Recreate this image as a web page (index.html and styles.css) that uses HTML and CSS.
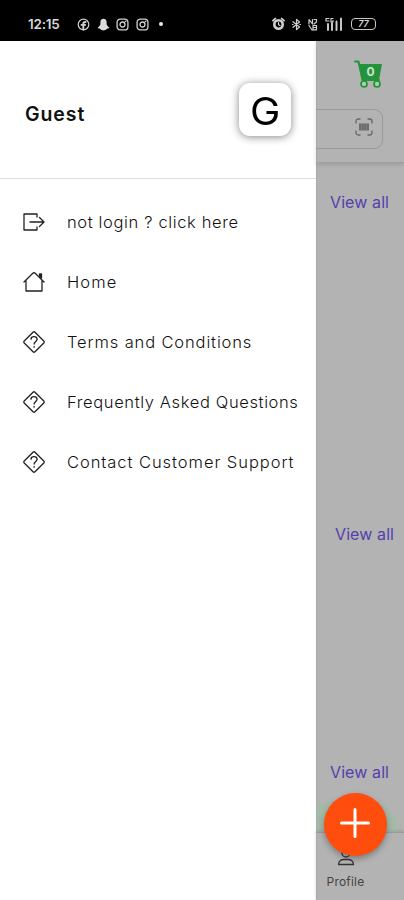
FILE: index.html
```
<!DOCTYPE html>
<html lang="en">
<head>
<meta charset="utf-8">
<title>Guest menu</title>
<link rel="stylesheet" href="styles.css">
</head>
<body>
<svg class="defs" width="0" height="0" aria-hidden="true">
  <symbol id="insta" viewBox="0 0 12 12"><rect x="1" y="1" width="10" height="10" rx="3"/><circle cx="6" cy="6" r="2.3"/><path d="M8.6 3.2h.4"/></symbol>
  <symbol id="help" viewBox="0 0 24 24"><path d="M11 2.2Q12 1.2 13 2.2L21.8 11Q22.8 12 21.8 13L13 21.8Q12 22.8 11 21.8L2.2 13Q1.2 12 2.2 11Z"/><path class="mark" d="M9 9.2C9 7.4 10.3 6.6 12 6.6s3.1 1 3.1 2.7c0 2-3 2.3-3 4.8M12.1 16.500v.7"/></symbol>
</svg>
<div class="screen">
  <header class="status">
    <span class="clock">12:15</span>
    <div class="notices">
      <svg class="line" width="13" height="13" viewBox="0 0 13 13"><circle cx="6.5" cy="6.5" r="5.3"/><path class="thick" d="M6.3 11.5V5.7Q6.3 3.9 8.5 4M4.5 6.9h3.7"/></svg>
      <svg class="solid" width="13" height="13" viewBox="0 0 13 13"><path d="M6.5.7C4.4.7 3.4 2.1 3.4 4v2.6L2.4 8 .5 10l2.5.8 1 1 2.5.6 2.500-.6 1-1 2.5-.8-1.900-2-1-1.4V4C9.600 2.100 8.600.7 6.500.7Z"/></svg>
      <svg class="line" width="13" height="13"><use href="#insta"/></svg>
      <svg class="line" width="13" height="13"><use href="#insta"/></svg>
      <i class="more"></i>
    </div>
    <div class="system">
      <svg class="line" width="13" height="14" viewBox="0 0 13 14"><circle class="alarm" cx="6.500" cy="7.500" r="4.200"/><path class="thick" d="M1 3.600 3.300 1.600M12 3.600 9.700 1.600"/><path d="M6.500 5.500v2.200l1.500.8"/></svg>
      <svg class="line" width="9" height="13" viewBox="0 0 9 13"><path d="M1 3.700 7.500 9 4.500 11.600V1.400L7.500 4 1 9.300M.5 6.500h.6M7.900 6.500h.6"/></svg>
      <svg class="line" width="10" height="13" viewBox="0 0 10 13"><path d="M1 6V1.500L4.500 6V1.500M6 1.500h2.500V4L6 6M1 7.500 4 12M5 7.500v4.300h3.500V7.500ZM5 9.500h3"/></svg>
      <svg class="line" width="19" height="14" viewBox="0 0 19 14"><path d="M1 1.500h3M1 1.500V4h3M8 1.500H6V5h2V3.500"/><path class="bars" d="M3 7v6M7 6v7M11.500 4.500V13M16 1.500V13"/></svg>
      <div class="battery"><span>77</span></div>
    </div>
  </header>
  <div class="body">
    <aside class="drawer">
      <div class="account">
        <h1>Guest</h1>
        <div class="logo"><span>G</span></div>
      </div>
      <nav>
        <a class="item login"><svg viewBox="0 0 24 24"><path d="M15 7V4H2v16h13v-3M8 12h13.500M17.500 7.500 22 12l-4.500 4.500"/></svg><span>not login ? click here</span></a>
        <a class="item home"><svg viewBox="0 0 24 24"><path d="M2 12 10.800 3.300Q12 2.200 13.200 3.300L22 12M4 10.500V21h16V10.500"/><path class="chimney" d="M17.500 4H19.500V8L17.500 6Z"/></svg><span>Home</span></a>
        <a class="item terms"><svg><use href="#help"/></svg><span>Terms and Conditions</span></a>
        <a class="item faq"><svg><use href="#help"/></svg><span>Frequently Asked Questions</span></a>
        <a class="item contact"><svg><use href="#help"/></svg><span>Contact Customer Support</span></a>
      </nav>
    </aside>
    <main class="page">
      <section class="top">
        <div class="cart"><svg width="30" height="30" viewBox="0 0 30 30"><path class="basket" d="M5.500 5H28L25.200 20H8Z"/><path class="frame" d="M1 2.500H4.500L8.500 21H25"/><circle cx="10" cy="25" r="3"/><circle cx="23" cy="25" r="3"/></svg><b>0</b></div>
        <div class="search"><svg width="18" height="18" viewBox="0 0 18 18"><path d="M1 5V3.500Q1 1 3.500 1H5M13 1h1.500Q17 1 17 3.500V5M17 13v1.500Q17 17 14.500 17H13M5 17H3.500Q1 17 1 14.500V13"/><path class="code" d="M4 5.500h10v7H4Z"/><path class="gap" d="M6.500 6v5.500M9 6v5.500M11.500 6v5.500"/></svg></div>
      </section>
      <section class="shelf first"><a>View all</a></section>
      <section class="shelf second"><a>View all</a></section>
      <section class="shelf third"><a>View all</a></section>
      <footer class="tab"><svg width="18" height="18" viewBox="0 0 18 18"><circle cx="9" cy="5" r="4"/><path d="M1.500 16.500Q2 11.500 7 11.500h4Q16 11.500 16.500 16.500Z"/></svg><span>Profile</span></footer>
      <div class="glow"></div>
      <button class="fab" aria-label="Add"><svg width="30" height="30" viewBox="0 0 30 30"><path d="M15 1.500v27M1.500 15h27"/></svg></button>
    </main>
  </div>
</div>
</body>
</html>
```
FILE: styles.css
```
* { box-sizing: border-box; }
body { margin: 0; font-family: Inter, "Liberation Sans", sans-serif; }
.defs { position: absolute; }
svg { fill: none; stroke-linecap: round; stroke-linejoin: round; flex: none; }
.screen { width: 404px; height: 900px; overflow: hidden; display: flex; flex-direction: column; }
.status { height: 41px; flex: none; background: #000; color: #d8d8d8; display: flex; align-items: center; padding: 7px 28px 0 28px; }
.clock { width: 49px; font-size: 13.500px; font-weight: 600; letter-spacing: -.2px; }
.notices { display: flex; align-items: center; gap: 6.500px; }
.line { stroke: #d0d0d0; stroke-width: 1.200; }
.line .thick, .line .bars { stroke-width: 1.900; }
.line .alarm { stroke-width: 2.600; }
.solid { fill: #ddd; }
.more { width: 4px; height: 4px; border-radius: 50%; background: #e8e8e8; margin-left: 4px; }
.system { margin-left: auto; display: flex; align-items: center; gap: 7px; }
.battery { width: 25px; height: 12px; border: 1.500px solid #c8c8c8; border-radius: 4px; font-size: 9px; font-weight: 600; font-style: italic; line-height: 9px; text-align: center; }
.body { flex: 1; display: flex; min-height: 0; }
.drawer { width: 316px; flex: none; background: #fff; color: #111; }
.account { height: 138px; border-bottom: 1px solid #dedede; display: flex; align-items: center; justify-content: space-between; padding: 0 25px 0 25px; }
h1 { margin: 8px 0 0; font-size: 19.500px; font-weight: 600; letter-spacing: .9px; }
.logo { width: 52px; height: 53px; border-radius: 11px; box-shadow: 0 1px 8px rgba(0,0,0,.48); display: grid; place-items: center; font-size: 38px; line-height: 53px; color: #000; }
.logo span { padding-top: 3px; line-height: 50px; transform: scaleX(1.070); }
nav { padding-top: 12.500px; }
.item { height: 60.200px; display: flex; align-items: center; gap: 21px; padding-left: 22px; font-size: 16.500px; font-weight: 300; white-space: nowrap; }
.login { letter-spacing: .640px; }
.home { letter-spacing: 1.150px; }
.terms { letter-spacing: .870px; }
.faq { letter-spacing: .630px; }
.contact { letter-spacing: .950px; }
.item svg { width: 24px; height: 24px; stroke: #222; stroke-width: 1.300; }
.item .mark { stroke-width: 1.600; }
.item .chimney { fill: #222; }
.page { width: 88px; position: relative; background: #b3b3b3; display: flex; flex-direction: column; box-shadow: inset 1px 0 #a9a9a9; }
.top { height: 122px; flex: none; border-bottom: 1px solid #a0a0a0; box-shadow: 0 2px 4px rgba(0,0,0,.12); display: flex; flex-direction: column; align-items: flex-start; }
.cart { display: grid; margin: 18px 0 0 38px; width: 30px; height: 30px; place-items: center; }
.cart svg, .cart b { grid-area: 1 / 1; }
.cart b { color: #cde5ce; font-size: 12px; line-height: 12px; margin: -4px 0 0 3px; }
.basket { fill: #24933b; }
.cart .frame { stroke: #24933b; stroke-width: 2; }
.cart circle { stroke: #24933b; stroke-width: 1.700; fill: #acd0ae; }
.search { width: 67px; height: 40px; margin-top: 20px; border: 1px solid #999; border-left: 0; border-radius: 0 9px 9px 0; display: flex; align-items: flex-start; justify-content: flex-end; padding: 8px 9px; }
.search svg { stroke: #666; stroke-width: 1.300; }
.search .code { fill: #6c6c6c; stroke: none; }
.search .gap { stroke: #8c8c8c; stroke-width: .6; }
.shelf { color: #5440ab; font-size: 16px; letter-spacing: .1px; line-height: 24px; white-space: nowrap; padding-left: 14px; flex: none; }
.first { height: 332px; padding-top: 27px; }
.second { height: 238px; padding: 27px 0 0 19px; }
.third { height: 99px; padding-top: 27px; }
.tab { flex: 1; width: 88px; padding: 15px 29px 0 0; border-top: 1px solid #9b9b9b; box-shadow: 0 -1px 3px rgba(0,0,0,.14); color: #444; font-size: 12px; letter-spacing: .2px; display: flex; flex-direction: column; align-items: center; gap: 8px; }
.tab svg { stroke: #333; stroke-width: 1.300; }
.glow { position: absolute; left: 0; top: 763px; width: 82px; height: 28px; border-radius: 0 28px 0 0; background: rgba(145,194,153,.55); filter: blur(3px); clip-path: inset(-6px -8px 0 0); }
.fab { position: absolute; left: 7.500px; top: 751.500px; width: 63px; height: 63px; border: 0; padding: 0; border-radius: 50%; background: #ff4d0d; box-shadow: 0 3px 6px rgba(0,0,0,.3); display: grid; place-items: center; }
.fab svg { stroke: #fff; stroke-width: 3; margin-top: -3px; }
```
